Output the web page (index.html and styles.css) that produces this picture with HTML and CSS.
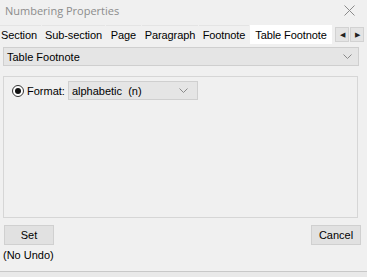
FILE: index.html
```html
<!DOCTYPE html>
<html lang="en">
<head>
    <meta charset="UTF-8">
    <title>Numbering Properties</title>
    <link rel="stylesheet" href="styles.css">
</head>
<body>
<div class="dialog">
    <div class="titlebar">
        <span class="title">Numbering Properties</span>
        <svg class="close" width="11" height="11" viewBox="0 0 11 11"><path d="M0.5 0.5L10.5 10.5M10.5 0.5L0.5 10.5" stroke="#8a8a8a" stroke-width="1"/></svg>
    </div>
    <div class="tabs">
        <span class="tab">Section</span>
        <span class="tab">Sub-section</span>
        <span class="tab">Page</span>
        <span class="tab">Paragraph</span>
        <span class="tab">Footnote</span>
        <span class="tab active">Table Footnote</span>
        <span class="scroller">
            <span class="arrow">&#9664;</span><span class="arrow">&#9654;</span>
        </span>
    </div>
    <div class="select wide">
        <span>Table Footnote</span>
        <svg width="9" height="5" viewBox="0 0 9 5"><path d="M0.5 0.5L4.5 4.5L8.5 0.5" fill="none" stroke="#8a8a8a"/></svg>
    </div>
    <div class="group">
        <div class="row">
            <span class="radio"><span class="dot"></span></span>
            <span class="label">Format:</span>
            <div class="select small">
                <span>alphabetic&nbsp; (n)</span>
                <svg width="9" height="5" viewBox="0 0 9 5"><path d="M0.5 0.5L4.5 4.5L8.5 0.5" fill="none" stroke="#8a8a8a"/></svg>
            </div>
        </div>
    </div>
    <div class="buttons">
        <div class="left">
            <button class="btn">Set</button>
            <div class="note">(No Undo)</div>
        </div>
        <button class="btn">Cancel</button>
    </div>
</div>
<div class="bottom"></div>
</body>
</html>
```

FILE: styles.css
```css
body { margin: 0; background: #f0f0f0; font-family: "Liberation Sans", Arial, sans-serif; font-size: 11px; color: #000; width: 367px; height: 277px; overflow: hidden; }
.dialog { height: 271px; background: #f0f0f0; border-bottom: 1px solid #c8c8c8; }
.titlebar { height: 25px; display: flex; align-items: center; justify-content: space-between; padding: 0 12px 4px 5px; box-sizing: border-box; }
.title { font-family: "Open Sans", sans-serif; font-size: 11px; color: #8c8c8c; }
.tabs { display: flex; align-items: stretch; height: 19px; gap: 1px; white-space: nowrap; }
.tab { flex: none; background: #f0f0f0; text-align: center; line-height: 19px; border-top: 1px solid #e4e4e4; box-sizing: border-box; letter-spacing: -0.1px; }
.tab:nth-child(1) { width: 41px; text-align: left; padding-left: 1px; }
.tab:nth-child(2) { width: 63px; }
.tab:nth-child(3) { width: 35px; }
.tab:nth-child(4) { width: 56px; }
.tab:nth-child(5) { width: 50px; }
.tab.active { width: 82px; background: #fff; border-top-color: #fff; }
.scroller { flex: none; display: flex; gap: 1px; margin-left: 2px; margin-top: 2px; height: 15px; }
.arrow { width: 14px; height: 15px; background: #e4e4e4; border: 1px solid #d2d2d2; box-sizing: border-box; font-size: 7px; line-height: 13px; text-align: center; color: #222; }
.select { display: flex; align-items: center; justify-content: space-between; background: #e5e5e5; border: 1px solid #cfcfcf; box-sizing: border-box; }
.select svg { flex: none; }
.wide { margin: 3px 8px 0 3px; height: 19px; padding: 0 6px 0 3px; }
.group { margin: 10px 9px 0 3px; height: 142px; border: 1px solid #d6d6d6; box-sizing: border-box; padding: 4px 0 0 8px; }
.row { display: flex; align-items: center; }
.radio { width: 12px; height: 12px; border: 1px solid #333; border-radius: 50%; display: flex; align-items: center; justify-content: center; background: #fff; box-sizing: border-box; }
.dot { width: 6px; height: 6px; border-radius: 50%; background: #111; }
.label { margin-left: 3px; }
.small { width: 130px; height: 19px; margin-left: 3px; padding: 0 9px 0 3px; }
.buttons { display: flex; justify-content: space-between; align-items: flex-start; margin: 7px 6px 0 4px; }
.btn { font: inherit; font-size: 11px; height: 20px; width: 50px; background: #e1e1e1; border: 1px solid #d0d0d0; padding: 0; color: #000; }
.note { margin-top: 4px; margin-left: -1px; }
.bottom { height: 5px; background: #e9e9e9; }
```
